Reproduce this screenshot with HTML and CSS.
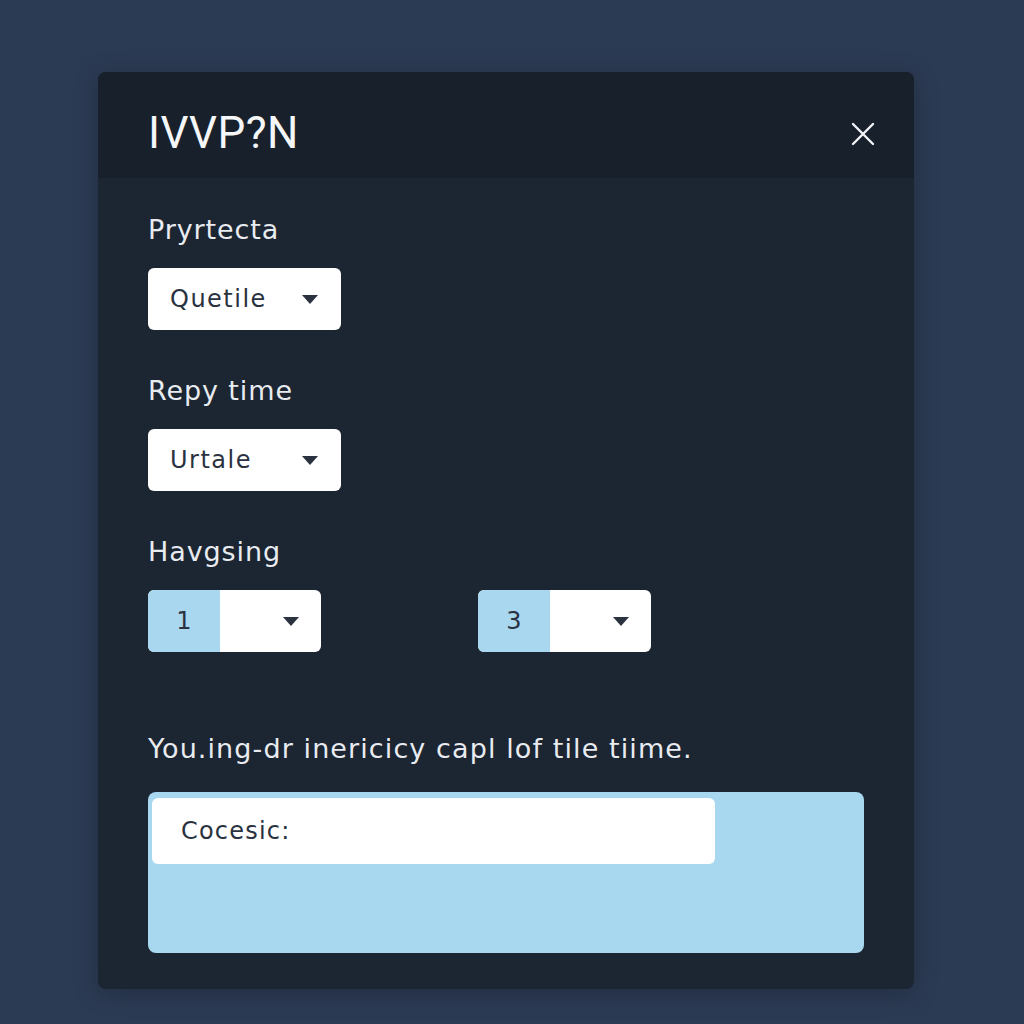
FILE: index.html
```html
<!DOCTYPE html>
<html lang="en">
<head>
  <meta charset="UTF-8">
  <title>IVVP?N</title>
  <link rel="stylesheet" href="styles.css">
</head>
<body>
<div class="dialog">
  <div class="header">
    <h1>IVVP?N</h1>
    <svg class="close" width="26" height="26" viewBox="0 0 26 26">
      <path d="M3 3 L23 23 M23 3 L3 23" stroke="#f2f4f7" stroke-width="2.4" stroke-linecap="round"/>
    </svg>
  </div>
  <div class="body">
    <div class="label">Pryrtecta</div>
    <div class="select">
      <span>Quetile</span>
      <span class="caret"></span>
    </div>

    <div class="label">Repy time</div>
    <div class="select">
      <span>Urtale</span>
      <span class="caret"></span>
    </div>

    <div class="label">Havgsing</div>
    <div class="pair">
      <div class="num-select">
        <span class="num">1</span>
        <span class="caret"></span>
      </div>
      <div class="num-select">
        <span class="num">3</span>
        <span class="caret"></span>
      </div>
    </div>

    <p class="note">You.ing-dr inericicy capl lof tile tiime.</p>
    <div class="panel">
      <div class="field">Cocesic:</div>
    </div>
  </div>
</div>
</body>
</html>
```

FILE: styles.css
```css
body {
  margin: 0;
  background: #2c3b54;
  font-family: 'DejaVu Sans', 'Noto Sans', sans-serif;
  height: 1024px;
}
.dialog {
  margin: 72px 0 0 98px;
  width: 816px;
  height: 917px;
  background: #1c2532;
  border-radius: 8px;
  overflow: hidden;
  box-shadow: 0 4px 24px rgba(0, 0, 0, 0.25);
}
.header {
  height: 106px;
  background: #18202b;
  display: flex;
  align-items: center;
  justify-content: space-between;
  padding: 0 38px 0 50px;
}
.header h1 {
  margin: 0;
  font-family: 'Roboto', sans-serif;
  font-weight: 400;
  font-size: 44px;
  letter-spacing: 0.5px;
  color: #f4f6f8;
  padding-top: 16px;
}
.close {
  margin-top: 18px;
}
.body {
  padding: 36px 50px 0 50px;
}
.label {
  font-size: 27px;
  line-height: 32px;
  letter-spacing: 0.9px;
  color: #e8ecf0;
  margin-bottom: 22px;
}
.select {
  width: 193px;
  height: 62px;
  background: #ffffff;
  border-radius: 6px;
  display: flex;
  align-items: center;
  justify-content: space-between;
  padding: 0 22px;
  box-sizing: border-box;
  font-size: 24px;
  letter-spacing: 1.5px;
  color: #2a3240;
  margin-bottom: 45px;
}
.caret {
  width: 0;
  height: 0;
  border-left: 8px solid transparent;
  border-right: 8px solid transparent;
  border-top: 9px solid #2a3240;
  margin-right: 1px;
}
.pair {
  display: flex;
  gap: 157px;
}
.num-select {
  width: 173px;
  height: 62px;
  background: #ffffff;
  border-radius: 6px;
  overflow: hidden;
  display: flex;
  align-items: center;
  justify-content: space-between;
  padding-right: 21px;
  box-sizing: border-box;
}
.num {
  width: 72px;
  height: 100%;
  background: #a9d7ef;
  display: flex;
  align-items: center;
  justify-content: center;
  font-size: 24px;
  color: #2a3240;
}
.note {
  margin: 80px 0 26px 0;
  font-size: 27px;
  line-height: 34px;
  letter-spacing: 1.1px;
  color: #e8ecf0;
}
.panel {
  height: 161px;
  background: #a8d8ef;
  border-radius: 8px;
  padding: 6px 4px;
  box-sizing: border-box;
}
.field {
  width: 563px;
  height: 66px;
  background: #ffffff;
  border-radius: 6px;
  display: flex;
  align-items: center;
  padding-left: 29px;
  box-sizing: border-box;
  font-size: 24px;
  letter-spacing: 1.2px;
  color: #2a3240;
}
```
